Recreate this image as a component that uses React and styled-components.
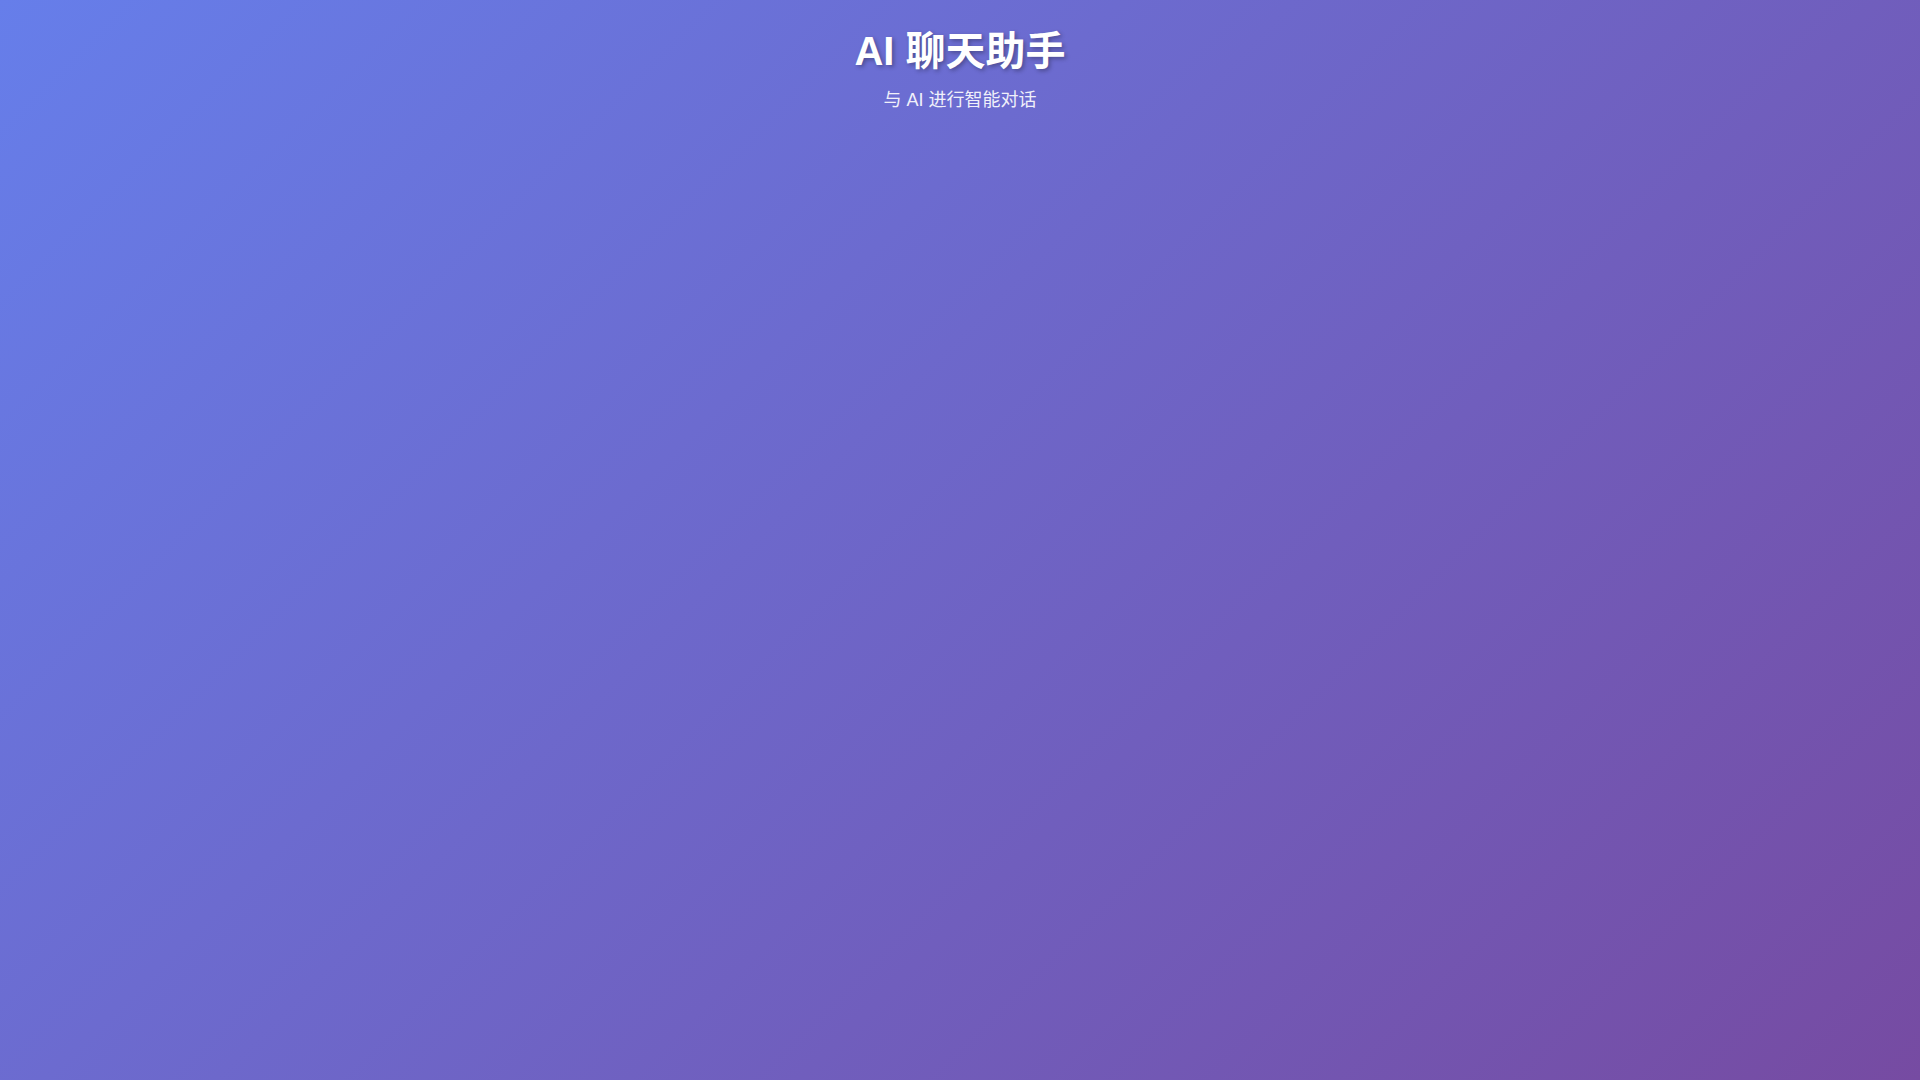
import React from 'react';
import styled, { createGlobalStyle } from 'styled-components';

const GlobalStyle = createGlobalStyle`
  * {
    box-sizing: border-box;
  }
  html, body {
    margin: 0;
    padding: 0;
  }
  body {
    font-family: 'Liberation Sans', Arial, 'Noto Sans CJK SC', sans-serif;
    background: linear-gradient(135deg, #667eea 0%, #764ba2 100%);
    min-height: 100vh;
  }
`;

const Page = styled.div`
  min-height: 100vh;
  display: flex;
  flex-direction: column;
  align-items: center;
`;

const Header = styled.header`
  text-align: center;
  color: #fff;
  padding: 27px 20px 20px;
`;

const Title = styled.h1`
  margin: 0 0 10px;
  font-size: 40px;
  font-weight: 700;
  line-height: 1.2;
  text-shadow: 2px 2px 4px rgba(0, 0, 0, 0.3);
`;

const Subtitle = styled.p`
  margin: 0;
  font-size: 18px;
  opacity: 0.9;
`;

export default function App() {
  return (
    <>
      <GlobalStyle />
      <Page>
        <Header>
          <Title>AI 聊天助手</Title>
          <Subtitle>与 AI 进行智能对话</Subtitle>
        </Header>
      </Page>
    </>
  );
}
